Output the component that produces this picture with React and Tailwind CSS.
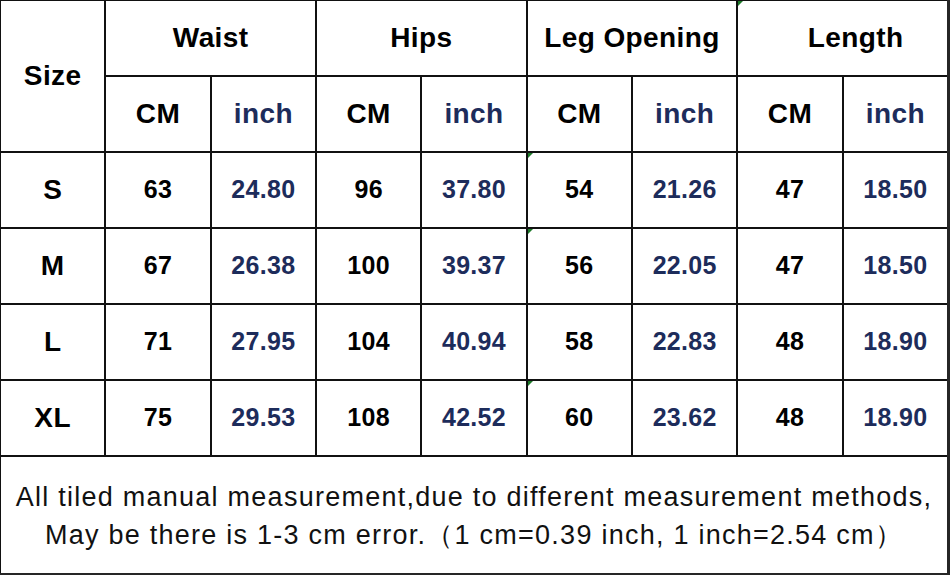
import React from "react";

const rows = [
  ["S", "63", "24.80", "96", "37.80", "54", "21.26", "47", "18.50"],
  ["M", "67", "26.38", "100", "39.37", "56", "22.05", "47", "18.50"],
  ["L", "71", "27.95", "104", "40.94", "58", "22.83", "48", "18.90"],
  ["XL", "75", "29.53", "108", "42.52", "60", "23.62", "48", "18.90"],
];

const green = [true, true, false, true];

function Mark() {
  return (
    <span className="absolute left-0 top-0 w-0 h-0 border-t-[5px] border-r-[5px] border-t-[#1e7a2a] border-r-transparent" />
  );
}

export default function App() {
  const font = { fontFamily: '"Liberation Sans", Arial, sans-serif' };
  const head = "bg-white flex items-center justify-center font-bold text-[28px] tracking-[0.4px]";
  const navy = "text-[#1d2c5b]";
  return (
    <div className="w-[950px] h-[575px] bg-[#262626]" style={font}>
      <div className="w-[947px] h-[573px] pl-px pt-px grid grid-cols-9 grid-rows-[74px_74px_74px_74px_74px_74px_1fr] gap-[2px] bg-[#111]">
        <div className={`${head} text-black row-span-2`}>Size</div>
        <div className={`${head} text-black col-span-2`}>Waist</div>
        <div className={`${head} text-black col-span-2`}>Hips</div>
        <div className={`${head} text-black col-span-2`}>Leg Opening</div>
        <div className={`${head} text-black col-span-2 pl-[26px] relative`}>
          <Mark />
          Length
        </div>
        {[0, 1, 2, 3].map((i) => (
          <React.Fragment key={i}>
            <div className={`${head} text-black`}>CM</div>
            <div className={`${head} ${navy}`}>inch</div>
          </React.Fragment>
        ))}
        {rows.map((r, ri) => (
          <React.Fragment key={ri}>
            <div className={`${head} text-black`}>{r[0]}</div>
            {r.slice(1).map((v, ci) => (
              <div
                key={ci}
                className={`relative bg-white flex items-center justify-center font-bold text-[25px] tracking-[0.3px] ${
                  ci % 2 === 1 ? navy : "text-black"
                }`}
              >
                {ci === 4 && green[ri] && <Mark />}
                {v}
              </div>
            ))}
          </React.Fragment>
        ))}
        <div className="col-span-9 bg-white flex flex-col items-center justify-center text-[27px] leading-[38px] tracking-[1.25px] text-[#111] pt-[2px]">
          <div>All tiled manual measurement,due to different measurement methods,</div>
          <div>
            May be there is 1-3 cm error.（1 cm=0.39 inch, 1 inch=2.54 cm）
          </div>
        </div>
      </div>
    </div>
  );
}
